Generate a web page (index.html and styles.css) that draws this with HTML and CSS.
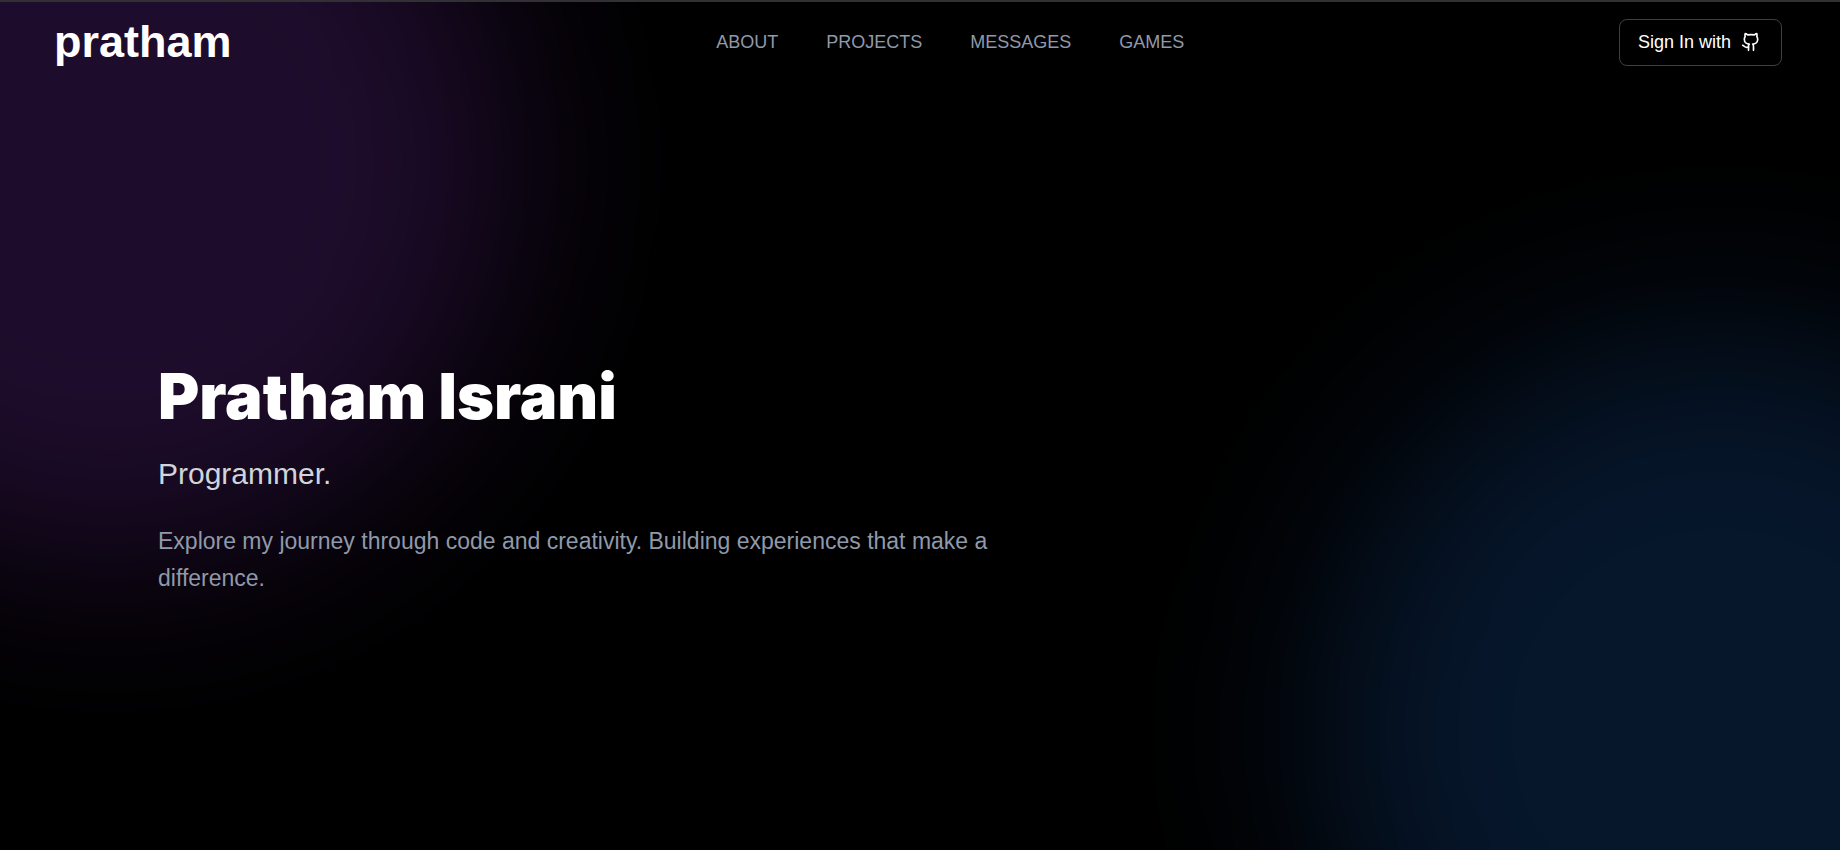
FILE: index.html
```html
<!DOCTYPE html>
<html lang="en">
<head>
    <meta charset="UTF-8">
    <meta name="viewport" content="width=device-width, initial-scale=1.0">
    <title>Pratham Israni</title>
    <link rel="stylesheet" href="styles.css">
</head>
<body>
    <!-- Background glow -->
    <div class="background">
        <div class="glow glow-purple"></div>
        <div class="glow glow-blue"></div>
    </div>

    <header class="navbar">
        <a href="#" class="logo">pratham</a>
        <nav>
            <ul class="nav-links">
                <li><a href="#about">ABOUT</a></li>
                <li><a href="#projects">PROJECTS</a></li>
                <li><a href="#messages">MESSAGES</a></li>
                <li><a href="#games">GAMES</a></li>
            </ul>
        </nav>
        <button type="button" class="sign-in">
            Sign In with
            <svg class="github-icon" viewBox="0 0 24 24" aria-hidden="true">
                <path d="M15 22v-4a4.8 4.8 0 0 0-1-3.5c3 0 6-2 6-5.5.08-1.25-.27-2.48-1-3.5.28-1.15.28-2.35 0-3.5 0 0-1 0-3 1.5-2.64-.5-5.36-.5-8 0C6 2 5 2 5 2c-.3 1.15-.3 2.35 0 3.5A5.403 5.403 0 0 0 4 9c0 3.5 3 5.5 6 5.5-.39.49-.68 1.05-.85 1.65-.17.6-.22 1.23-.15 1.85v4"/>
                <path d="M9 18c-4.51 2-5-2-7-2"/>
            </svg>
        </button>
    </header>

    <main class="hero">
        <h1>Pratham Israni</h1>
        <h2>Programmer.</h2>
        <p>Explore my journey through code and creativity. Building experiences that make a difference.</p>
    </main>
</body>
</html>
```
FILE: styles.css
```css
* {
    box-sizing: border-box;
    margin: 0;
    padding: 0;
}

body {
    font-family: Arial, "Liberation Sans", sans-serif;
    background-color: #000;
    color: white;
    min-height: 100vh;
    display: flex;
    flex-direction: column;
    position: relative;
    border-top: 2px solid #303035;
}

/* Blurred circles behind the content */
.background {
    position: absolute;
    inset: 0;
    z-index: -1;
    overflow: hidden;
}

.glow {
    position: absolute;
    width: 800px;
    height: 800px;
    border-radius: 50%;
    filter: blur(92px);
}

.glow-purple {
    top: -240px;
    left: -290px;
    background-color: #1e0c2c;
}

.glow-blue {
    right: -280px;
    bottom: -280px;
    background-color: #06162b;
}

.navbar {
    display: flex;
    align-items: center;
    justify-content: space-between;
    padding: 16px 58px 16px 54px;
}

.logo {
    font-size: 45px;
    line-height: 48px;
    font-weight: bold;
    color: white;
    text-decoration: none;
}

.nav-links {
    display: flex;
    gap: 48px;
    padding-left: 50px;
    list-style: none;
}

.nav-links a {
    font-size: 18px;
    color: #9099a9;
    text-decoration: none;
}

.nav-links a:hover {
    color: white;
}

.sign-in {
    display: flex;
    align-items: center;
    gap: 10px;
    height: 47px;
    padding: 0 20px 0 18px;
    font-family: inherit;
    font-size: 18px;
    color: white;
    background-color: #000;
    border: 1px solid #334155;
    border-radius: 8px;
    cursor: pointer;
}

.github-icon {
    width: 20px;
    height: 20px;
    fill: none;
    stroke: currentColor;
    stroke-width: 2;
    stroke-linecap: round;
    stroke-linejoin: round;
}

.hero {
    flex: 1;
    display: flex;
    flex-direction: column;
    justify-content: center;
    max-width: 1040px;
    padding: 24px 32px 0 158px;
}

.hero h1 {
    font-family: "Arial Black", Inter, sans-serif;
    font-size: 63px;
    line-height: 72px;
    font-weight: 900;
}

.hero h2 {
    margin-top: 24px;
    font-size: 30px;
    line-height: 36px;
    font-weight: normal;
    color: #d1d5db;
}

.hero p {
    margin-top: 31px;
    font-size: 23px;
    line-height: 37px;
    color: #9099a9;
}
```
